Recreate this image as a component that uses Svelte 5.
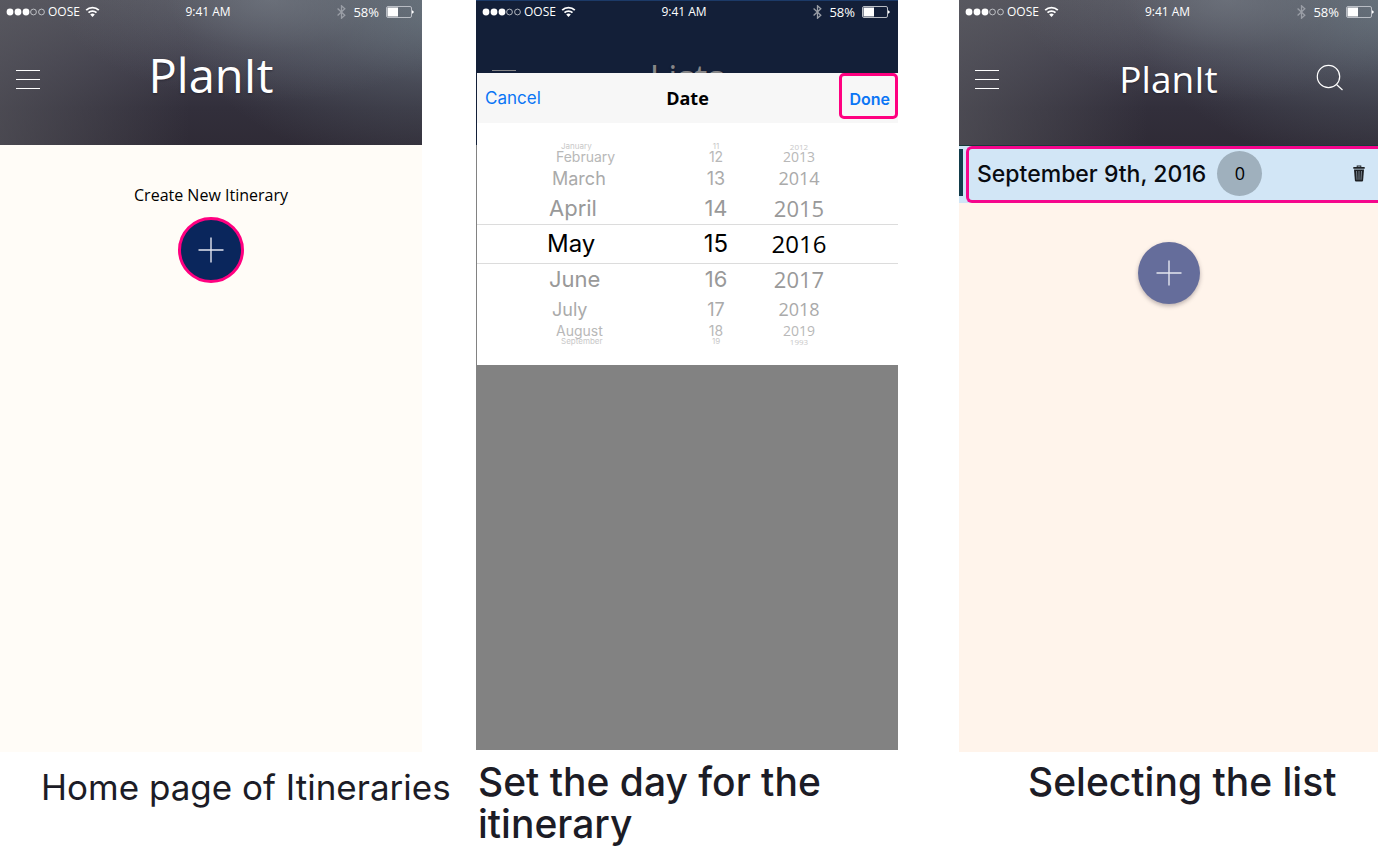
<script>
  const wheel = [
    { tier: 'edge', month: 'January', day: 11, year: 2012 },
    { tier: 'far', month: 'February', day: 12, year: 2013 },
    { tier: 'mid', month: 'March', day: 13, year: 2014 },
    { tier: 'near', month: 'April', day: 14, year: 2015 },
    { tier: 'chosen', month: 'May', day: 15, year: 2016 },
    { tier: 'near', month: 'June', day: 16, year: 2017 },
    { tier: 'mid', month: 'July', day: 17, year: 2018 },
    { tier: 'far', month: 'August', day: 18, year: 2019 },
    { tier: 'edge', month: 'September', day: 19, year: 1993 }
  ];
  const columns = ['month', 'day', 'year'];
</script>

{#snippet statusBar()}
  <div class="status">
    <div class="carrier">
      <svg width="39" height="8" viewBox="0 0 39 8" aria-hidden="true">
        <g fill="#fff"><circle cx="4" cy="4" r="3.4" /><circle cx="12" cy="4" r="3.4" /><circle cx="20" cy="4" r="3.4" /></g>
        <g fill="none" stroke="#d6d8dc" stroke-width="0.8"><circle cx="27.5" cy="4" r="2.9" /><circle cx="35.5" cy="4" r="2.9" /></g>
      </svg>
      <span>OOSE</span>
      <svg class="wifi" width="15" height="12" viewBox="0 0 15 12" fill="none" stroke="#fff" stroke-width="1.8" aria-hidden="true">
        <path d="M1.2 4.2a9 9 0 0 1 12.6 0M3.5 6.7a5.7 5.7 0 0 1 8 0" />
        <path d="M5.2 8.6a3.3 3.3 0 0 1 4.6 0L7.5 11z" fill="#fff" stroke="none" />
      </svg>
    </div>
    <span>9:41 AM</span>
    <div class="power">
      <svg width="9" height="14" viewBox="0 0 9 14" fill="none" stroke="#9a9ea6" stroke-width="1.3" aria-hidden="true">
        <path d="M.6 3.6l7.2 6.6-3.3 3V.8l3.3 3L.6 10.4" />
      </svg>
      <span>58%</span>
      <svg width="28" height="12" viewBox="0 0 28 12" aria-hidden="true">
        <rect x="0.5" y="0.5" width="25" height="11" rx="1.5" fill="none" stroke="#b9bdc4" />
        <rect x="1.5" y="1.5" width="10.5" height="9" fill="#fff" />
        <path d="M26 4.2l1.6 1v1.6l-1.6 1z" fill="#fff" />
      </svg>
    </div>
  </div>
{/snippet}

{#snippet menuButton()}
  <button class="icon" aria-label="Menu">
    <svg width="24" height="22" viewBox="0 0 24 22" stroke="currentColor" stroke-width="1.2" aria-hidden="true">
      <path d="M0 1.5h24M0 10.5h24M0 19.5h24" />
    </svg>
  </button>
{/snippet}

{#snippet plus()}
  <svg width="26" height="26" viewBox="0 0 26 26" stroke="#e4e6f0" stroke-width="1.4" aria-hidden="true">
    <path d="M13 .5v25M.5 13h25" />
  </svg>
{/snippet}

<main>
  <figure>
    <section class="phone home">
      <header class="dusk">
        {@render statusBar()}
        <nav>
          {@render menuButton()}
          <h1 class="large">PlanIt</h1>
        </nav>
      </header>
      <div class="create">
        <label for="create">Create New Itinerary</label>
        <button id="create" class="add ringed" aria-label="Create New Itinerary">{@render plus()}</button>
      </div>
    </section>
    <figcaption class="first">Home page of Itineraries</figcaption>
  </figure>

  <figure>
    <section class="phone dimmed">
      <header class="navy">
        {@render statusBar()}
        <nav>
          {@render menuButton()}
          <h1>Lists</h1>
        </nav>
      </header>
      <div class="sheet">
        <div class="toolbar">
          <button class="cancel">Cancel</button>
          <h2>Date</h2>
          <button class="done">Done</button>
        </div>
        <div class="picker">
          {#each columns as column}
            <ul class={column} role="listbox" aria-label={column}>
              {#each wheel as row}
                <li class={row.tier} role="option" aria-selected={row.tier === 'chosen'}>{row[column]}</li>
              {/each}
            </ul>
          {/each}
        </div>
      </div>
    </section>
    <figcaption class="second">Set the day for the itinerary</figcaption>
  </figure>

  <figure class="last">
    <section class="phone list">
      <header class="dusk">
        {@render statusBar()}
        <nav>
          {@render menuButton()}
          <h1>PlanIt</h1>
          <button class="icon search" aria-label="Search">
            <svg width="28" height="28" viewBox="0 0 28 28" fill="none" stroke="#fff" stroke-width="1.2" aria-hidden="true">
              <circle cx="12.5" cy="12.5" r="11.2" /><path d="M20.5 20.5l6 5.5" />
            </svg>
          </button>
        </nav>
      </header>
      <div class="entry">
        <div class="entry-box">
          <a href="#september-9">September 9th, 2016</a>
          <span class="count">0</span>
          <button class="icon trash" aria-label="Delete">
            <svg width="12" height="17" viewBox="0 0 12 17" aria-hidden="true">
              <path d="M.3 2h3.4V.6h4.6V2h3.4v1.8H.3zM4.6 1.4V2h2.8v-.6z" fill="#1d2024" fill-rule="evenodd" />
              <path d="M1 4.4h10l-.9 11.2q-.1 1-1.1 1H3q-1 0-1.1-1z" fill="#1d2024" />
              <path d="M3.5 6l.5 8.8M6 6v8.8M8.5 6L8 14.8" stroke="#8c98a3" stroke-width=".8" />
            </svg>
          </button>
        </div>
      </div>
      <button class="add soft" aria-label="Add itinerary">{@render plus()}</button>
    </section>
    <figcaption class="third">Selecting the list</figcaption>
  </figure>
</main>

<style>
  :global(body) {
    margin: 0;
    background: #fff;
  }
  main {
    display: grid;
    grid-template-columns: 422fr 422fr 426fr;
    column-gap: 54px;
    min-height: 100vh;
    font-family: 'Open Sans', 'Noto Sans', sans-serif;
    color: #000;
  }
  figure {
    display: flex;
    flex-direction: column;
    margin: 0;
    min-width: 0;
  }
  .last {
    margin-left: 7px;
  }
  .phone {
    flex: 1;
    display: flex;
    flex-direction: column;
  }
  .home {
    background: #fffcf7;
  }
  .dimmed {
    background: #828282;
  }
  .list {
    background: #fff4eb;
  }
  button {
    margin: 0;
    padding: 0;
    border: 0;
    background: none;
    font: inherit;
    color: inherit;
    cursor: pointer;
  }
  svg {
    display: block;
    flex: none;
  }

  header {
    box-sizing: border-box;
    height: 145px;
    color: #fff;
  }
  .dusk {
    background:
      radial-gradient(ellipse 50% 70% at 64% 0%, rgba(116, 122, 132, 0.65), rgba(116, 122, 132, 0.2) 50%, transparent),
      radial-gradient(ellipse 65% 120% at 106% 0%, rgba(106, 120, 130, 0.85), rgba(106, 120, 130, 0.3) 50%, transparent),
      linear-gradient(90deg, rgba(92, 92, 98, 0.6), transparent 45%),
      linear-gradient(#52525c, #3e3c49 45%, #322f3b 75%, #2f2b36);
  }
  .navy {
    background: #131f38;
    box-shadow: inset 0 1px #1c3a68;
  }
  .status {
    display: flex;
    align-items: center;
    height: 24px;
    padding: 0 8px 0 6px;
    font-size: 12px;
    line-height: 24px;
    white-space: nowrap;
  }
  .last .status {
    padding-right: 4px;
  }
  .carrier,
  .power {
    flex: 1;
    display: flex;
    align-items: center;
  }
  .carrier {
    gap: 3px;
  }
  .wifi {
    margin-left: 2px;
  }
  .power {
    justify-content: flex-end;
    gap: 7px;
    margin-left: 4px;
    font-size: 13px;
  }
  nav {
    display: grid;
    grid-template-columns: 1fr auto 1fr;
    align-items: center;
    height: 112px;
    padding: 0 16px;
  }
  .icon {
    justify-self: start;
  }
  nav .search {
    justify-self: end;
    margin-right: 18px;
    padding-bottom: 4px;
  }
  h1 {
    margin: 0;
    padding-bottom: 2px;
    font-size: 37px;
    font-weight: 400;
    line-height: 50px;
    text-shadow: 0 1px 2px rgba(20, 18, 30, 0.5);
  }
  h1.large {
    font-size: 47px;
    padding-bottom: 10px;
  }
  .navy nav {
    color: #868688;
  }
  .navy h1 {
    font-size: 36px;
    padding-bottom: 4px;
  }

  .create {
    display: flex;
    flex-direction: column;
    align-items: center;
    gap: 11px;
    padding-top: 39px;
  }
  .create label {
    font-size: 16px;
    line-height: 22px;
  }
  .add {
    box-sizing: border-box;
    display: grid;
    place-items: center;
    border-radius: 50%;
  }
  .ringed {
    width: 66px;
    height: 66px;
    border: 3px solid #ff0080;
    background: #0a265c;
  }
  .soft {
    align-self: center;
    width: 62px;
    height: 62px;
    margin-top: 39px;
    background: #656d9b;
    box-shadow: 0 2px 4px rgba(60, 50, 60, 0.35);
  }

  .sheet {
    position: relative;
    margin: -72px 0 0 1px;
    padding-bottom: 20px;
    background: #fff;
  }
  .toolbar {
    display: grid;
    grid-template-columns: 1fr auto 1fr;
    align-items: center;
    height: 50px;
    background: #f7f7f7;
    color: #0a75f5;
    font-family: Inter, 'Liberation Sans', sans-serif;
    font-size: 17px;
  }
  .cancel {
    justify-self: start;
    padding-left: 8px;
  }
  h2 {
    margin: 0;
    color: #000;
    font: 700 18px/24px 'Open Sans', sans-serif;
  }
  .done {
    align-self: start;
    justify-self: end;
    box-sizing: border-box;
    height: 46px;
    padding: 5px 5px 0 7px;
    border: 3px solid #ff0080;
    border-radius: 5px;
    font-size: 16px;
    font-weight: 600;
  }
  .picker {
    display: grid;
    grid-template-columns: 139fr 60fr 83fr 69fr;
    padding: 20px 0 0 70px;
    font-family: Inter, 'Liberation Sans', sans-serif;
    background: linear-gradient(#dcdcdc, #dcdcdc) 0 101px / 100% 1px no-repeat,
      linear-gradient(#dcdcdc, #dcdcdc) 0 140px / 100% 1px no-repeat;
  }
  ul {
    margin: 0;
    padding: 0;
    list-style: none;
    text-align: center;
  }
  ul.month {
    text-align: left;
  }
  ul.year {
    padding-left: 23px;
    font-family: 'Open Sans', sans-serif;
  }
  li {
    white-space: nowrap;
  }
  .chosen {
    font-size: 24px;
    line-height: 40px;
  }
  .near {
    font-size: 22px;
    line-height: 31px;
    color: #999;
  }
  .mid {
    font-size: 18px;
    line-height: 29px;
    color: #aaa;
  }
  .far {
    font-size: 14px;
    line-height: 14px;
    color: #b8b8b8;
  }
  .edge {
    height: 7px;
    font-size: 8px;
    line-height: 7px;
    color: #c8c8c8;
  }
  .month .near {
    padding-left: 2px;
  }
  .month .mid {
    padding-left: 5px;
  }
  .month .far {
    padding-left: 9px;
  }
  .month .edge {
    padding-left: 14px;
  }

  .entry {
    display: flex;
    padding-left: 7px;
    border-top: 1px solid #173a38;
    background: linear-gradient(#123c4a, #123c4a) 0 3px / 4px 47px no-repeat, #d0e6f7;
  }
  .entry-box {
    flex: 1;
    box-sizing: border-box;
    display: flex;
    align-items: center;
    height: 57px;
    padding: 0 13px 2px 8px;
    border: 3px solid #f5058c;
    border-right: 0;
    border-radius: 6px 0 0 6px;
    background: #d2e6f6;
  }
  .entry a {
    color: #080b10;
    font-family: Inter, 'Liberation Sans', sans-serif;
    font-size: 23px;
    font-weight: 500;
    line-height: 30px;
    text-decoration: none;
    white-space: nowrap;
  }
  .count {
    width: 45px;
    height: 45px;
    margin-left: 11px;
    border-radius: 50%;
    background: #9fb0bd;
    font-size: 18px;
    line-height: 44px;
    text-align: center;
  }
  .trash {
    margin-left: auto;
  }

  figcaption {
    box-sizing: border-box;
    height: 100px;
    color: #1c1c26;
    font-family: Inter, 'Liberation Sans', sans-serif;
    font-size: 39px;
    font-weight: 500;
    line-height: 42px;
  }
  .first {
    padding: 14px 0 0 41px;
    font-size: 35px;
    font-weight: 400;
    white-space: nowrap;
  }
  .second {
    height: 102px;
    padding: 11px 60px 0 2px;
  }
  .third {
    padding: 9px 0 0 69px;
    white-space: nowrap;
  }
</style>
